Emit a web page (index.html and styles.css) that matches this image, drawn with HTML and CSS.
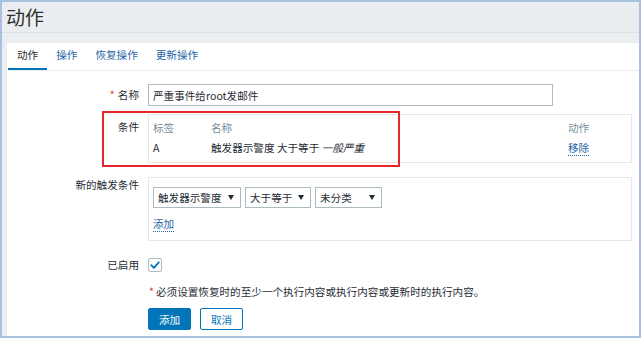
FILE: index.html
```html
<!DOCTYPE html>
<html lang="zh-CN">
<head>
<meta charset="utf-8">
<title>动作</title>
<link rel="stylesheet" href="styles.css">
</head>
<body>
<div class="frame">
  <header class="page-head"><h1 class="title">动作</h1></header>
  <main class="card">
    <nav class="tabs">
      <span class="tab active">动作</span>
      <a class="tab">操作</a>
      <a class="tab">恢复操作</a>
      <a class="tab">更新操作</a>
    </nav>
    <form class="form">
      <div class="row row-name">
        <label class="label"><span class="req">*</span>名称</label>
        <div class="field"><input class="text-input" type="text" value="严重事件给root发邮件"></div>
      </div>
      <div class="row row-cond">
        <div class="label label-cond">条件</div>
        <div class="field">
          <div class="box cond-box">
            <table class="cond-table">
              <thead>
                <tr><th class="c1">标签</th><th class="c2">名称</th><th class="c3">动作</th></tr>
              </thead>
              <tbody>
                <tr><td>A</td><td>触发器示警度 大于等于 <em>一般严重</em></td><td><a class="link">移除</a></td></tr>
              </tbody>
            </table>
          </div>
        </div>
        <div class="highlight"></div>
      </div>
      <div class="row row-new">
        <div class="label label-new">新的触发条件</div>
        <div class="field">
          <div class="box new-box">
            <div class="selects">
              <div class="select s1">触发器示警度</div>
              <div class="select s2">大于等于</div>
              <div class="select s3">未分类</div>
            </div>
            <div class="add-line"><a class="link">添加</a></div>
          </div>
        </div>
      </div>
      <div class="row row-enabled">
        <div class="label label-enabled">已启用</div>
        <div class="field">
          <span class="checkbox"><svg width="14" height="14" viewBox="0 0 14 14"><path d="M3.2 7.2 L5.9 9.8 L10.8 4.3" fill="none" stroke="#0275b8" stroke-width="1.8" stroke-linecap="round" stroke-linejoin="round"/></svg></span>
        </div>
      </div>
      <div class="row row-note">
        <div class="label"></div>
        <div class="field note"><span class="req">*</span>必须设置恢复时的至少一个执行内容或执行内容或更新时的执行内容。</div>
      </div>
      <div class="row row-buttons">
        <div class="label"></div>
        <div class="field buttons">
          <button type="button" class="btn btn-primary">添加</button>
          <button type="button" class="btn btn-alt">取消</button>
        </div>
      </div>
    </form>
  </main>
</div>
</body>
</html>
```
FILE: styles.css
```css
html, body {
  margin: 0;
  padding: 0;
}
body {
  font-family: "Noto Sans CJK SC", "Noto Sans", sans-serif;
  font-size: 10.6px;
  color: #1f2c33;
  background: #fff;
}
.frame {
  width: 641px;
  height: 338px;
  box-sizing: border-box;
  border: 2px solid #a9c1e0;
  background: #ebeef0;
  display: flex;
  flex-direction: column;
  overflow: hidden;
}
.page-head {
  flex: none;
  height: 30px;
  border-bottom: 1px solid #dce1e5;
  padding-left: 4px;
}
.title {
  margin: 0;
  font-size: 19px;
  font-weight: normal;
  line-height: 30px;
  color: #2e2e2e;
}
.card {
  flex: 1;
  margin: 10px 0 0 5px;
  background: #fff;
}
.tabs {
  display: flex;
  height: 27px;
  padding-left: 1px;
  border-bottom: 1px solid #ebeef0;
}
.tab {
  height: 27px;
  box-sizing: border-box;
  padding: 0 9px;
  line-height: 24px;
  color: #1f65a6;
  cursor: pointer;
}
.tab.active {
  color: #1f2c33;
  box-shadow: inset 0 -2px 0 #0275b8;
}
.form {
  padding: 13px 7px 0 0;
}
.row {
  display: flex;
  gap: 9px;
  position: relative;
}
.label {
  flex: none;
  width: 132px;
  text-align: right;
  color: #1f2c33;
}
.field {
  flex: 1;
  min-width: 0;
}
.req {
  color: #e33734;
  margin-right: 3px;
}
.row-name .label {
  line-height: 22px;
}
.text-input {
  display: block;
  width: 405px;
  height: 22px;
  box-sizing: border-box;
  border: 1px solid #acbbc2;
  padding: 0 4px;
  font: inherit;
  color: #1f2c33;
  background: #fff;
  outline: none;
}
.row-cond {
  margin-top: 8px;
}
.label-cond {
  padding-top: 3px;
  line-height: 20px;
}
.box {
  width: 484px;
  box-sizing: border-box;
  border: 1px solid #e6e9ec;
}
.cond-box {
  padding: 3px 4px 4px;
}
.cond-table {
  width: 100%;
  border-collapse: collapse;
}
.cond-table th {
  text-align: left;
  font-weight: normal;
  color: #768d99;
  height: 18px;
  padding: 0;
}
.cond-table td {
  height: 22px;
  padding: 0;
}
.cond-table .c1 { width: 58px; }
.cond-table .c2 { width: 357px; }
.cond-table em {
  font-style: italic;
}
.link {
  color: #1f65a6;
  text-decoration: none;
  border-bottom: 1px dotted #1f65a6;
  cursor: pointer;
}
.highlight {
  position: absolute;
  left: 95px;
  top: -3px;
  width: 298px;
  height: 56px;
  box-sizing: border-box;
  border: 2px solid #e8262a;
  pointer-events: none;
}
.row-new {
  margin-top: 14px;
}
.label-new {
  line-height: 16px;
}
.new-box {
  padding: 9px 4px 8px;
}
.selects {
  display: flex;
  gap: 4px;
}
.select {
  position: relative;
  height: 21px;
  box-sizing: border-box;
  border: 1px solid #acbbc2;
  padding-left: 4px;
  line-height: 19px;
  color: #1f2c33;
  background: #fff;
}
.select::after {
  content: "";
  position: absolute;
  right: 6px;
  top: 7px;
  border-left: 3px solid transparent;
  border-right: 3px solid transparent;
  border-top: 5px solid #1f2c33;
}
.s1 { width: 88px; }
.s2 { width: 66px; }
.s3 { width: 67px; }
.add-line {
  margin-top: 8px;
  line-height: 16px;
}
.row-enabled {
  margin-top: 17px;
}
.label-enabled {
  line-height: 14px;
}
.checkbox {
  display: block;
  width: 14px;
  height: 14px;
  box-sizing: border-box;
  border: 1px solid #acbbc2;
  border-radius: 2px;
  position: relative;
}
.checkbox svg {
  display: block;
  margin: -1px;
}
.row-note {
  margin-top: 12px;
  line-height: 16px;
}
.note .req {
  margin-left: 1px;
  margin-right: 2px;
}
.row-buttons {
  margin-top: 8px;
}
.buttons {
  display: flex;
  gap: 9px;
}
.btn {
  width: 43px;
  height: 22px;
  box-sizing: border-box;
  border-radius: 2px;
  font: inherit;
  padding: 0;
  cursor: pointer;
}
.btn-primary {
  background: #0275b8;
  border: 1px solid #0275b8;
  color: #fff;
}
.btn-alt {
  background: #fff;
  border: 1px solid #0275b8;
  color: #0275b8;
}
```
